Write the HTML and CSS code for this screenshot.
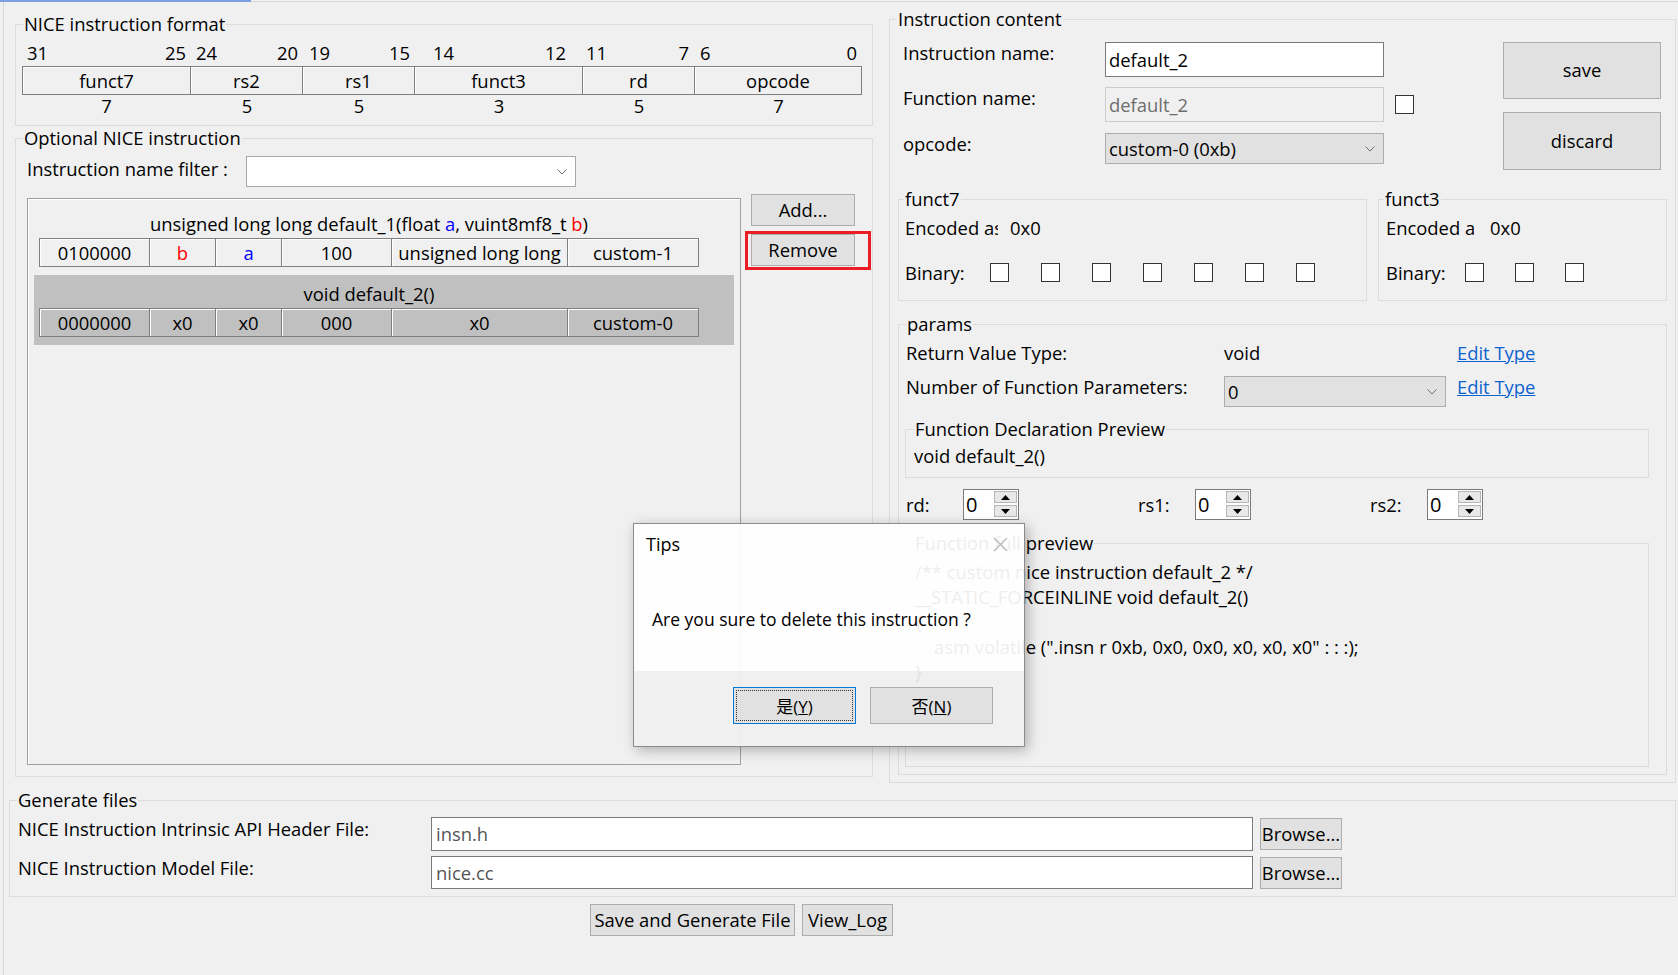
FILE: index.html
```html
<!DOCTYPE html>
<html>
<head>
<meta charset="utf-8">
<title>NICE instruction</title>
<link rel="stylesheet" href="styles.css">
</head>
<body>
<div class="app">
  <div class="tabbar"><div class="tab-sel"></div><div class="tab-rest"></div></div>
  <div class="pane">
    <div class="top">
      <div class="leftcol">
        <fieldset class="grp fmt">
          <legend>NICE instruction format</legend>
          <div class="bits">
            <div class="bitcell"><span>31</span><span>25</span></div>
            <div class="bitcell"><span>24</span><span>20</span></div>
            <div class="bitcell"><span>19</span><span>15</span></div>
            <div class="bitcell"><span>14</span><span>12</span></div>
            <div class="bitcell"><span>11</span><span>7</span></div>
            <div class="bitcell"><span>6</span><span>0</span></div>
          </div>
          <div class="fmt-table">
            <div class="fcell">funct7</div>
            <div class="fcell">rs2</div>
            <div class="fcell">rs1</div>
            <div class="fcell">funct3</div>
            <div class="fcell">rd</div>
            <div class="fcell">opcode</div>
          </div>
          <div class="wrow">
            <div>7</div><div>5</div><div>5</div><div>3</div><div>5</div><div>7</div>
          </div>
        </fieldset>

        <fieldset class="grp opt">
          <legend>Optional NICE instruction</legend>
          <div class="filter-row">
            <div class="filter-label">Instruction name filter :</div>
            <div class="combo white filter-combo">
              <span class="combo-text"></span>
              <svg class="chev" width="10" height="6" viewBox="0 0 10 6"><polyline points="0.5,0.5 5,5 9.5,0.5" fill="none" stroke="#707070" stroke-width="1"/></svg>
            </div>
          </div>
          <div class="list-row">
            <div class="list">
              <div class="item">
                <div class="item-head">unsigned long long default_1(float <span class="blue">a</span>, vuint8mf8_t <span class="red">b</span>)</div>
                <div class="item-table">
                  <div class="icell">0100000</div>
                  <div class="icell red">b</div>
                  <div class="icell blue">a</div>
                  <div class="icell">100</div>
                  <div class="icell">unsigned long long</div>
                  <div class="icell">custom-1</div>
                </div>
              </div>
              <div class="item sel">
                <div class="item-head">void default_2()</div>
                <div class="item-table">
                  <div class="icell">0000000</div>
                  <div class="icell">x0</div>
                  <div class="icell">x0</div>
                  <div class="icell">000</div>
                  <div class="icell">x0</div>
                  <div class="icell">custom-0</div>
                </div>
              </div>
            </div>
            <div class="side-btns">
              <button class="btn add">Add...</button>
              <div class="hl-wrap">
                <button class="btn remove">Remove</button>
                <div class="hl"></div>
              </div>
            </div>
          </div>
        </fieldset>
      </div>

      <fieldset class="grp content">
        <legend>Instruction content</legend>
        <div class="ic-top">
          <div class="form">
            <div class="frow">
              <div class="flabel">Instruction name:</div>
              <div class="tinput">default_2</div>
            </div>
            <div class="frow">
              <div class="flabel">Function name:</div>
              <div class="tinput dis">default_2</div>
              <span class="chk fchk"></span>
            </div>
            <div class="frow r3">
              <div class="flabel">opcode:</div>
              <div class="combo ocombo">
                <span class="combo-text">custom-0 (0xb)</span>
                <svg class="chev" width="10" height="6" viewBox="0 0 10 6"><polyline points="0.5,0.5 5,5 9.5,0.5" fill="none" stroke="#707070" stroke-width="1"/></svg>
              </div>
            </div>
          </div>
          <div class="ic-btns">
            <button class="btn save">save</button>
            <button class="btn discard">discard</button>
          </div>
        </div>

        <div class="funct-row">
          <fieldset class="grp f7">
            <legend>funct7</legend>
            <div class="enc-row"><span class="enc-label">Encoded as:</span><span class="enc-val">0x0</span></div>
            <div class="bin-row">
              <span class="bin-label">Binary:</span>
              <span class="chk"></span><span class="chk"></span><span class="chk"></span><span class="chk"></span><span class="chk"></span><span class="chk"></span><span class="chk"></span>
            </div>
          </fieldset>
          <fieldset class="grp f3">
            <legend>funct3</legend>
            <div class="enc-row"><span class="enc-label">Encoded as:</span><span class="enc-val">0x0</span></div>
            <div class="bin-row">
              <span class="bin-label">Binary:</span>
              <span class="chk"></span><span class="chk"></span><span class="chk"></span>
            </div>
          </fieldset>
        </div>

        <fieldset class="grp params">
          <legend>params</legend>
          <div class="prow1">
            <span class="plabel">Return Value Type:</span>
            <span class="pval">void</span>
            <span class="link">Edit Type</span>
          </div>
          <div class="prow2">
            <span class="plabel">Number of Function Parameters:</span>
            <div class="combo pcombo">
              <span class="combo-text">0</span>
              <svg class="chev" width="10" height="6" viewBox="0 0 10 6"><polyline points="0.5,0.5 5,5 9.5,0.5" fill="none" stroke="#707070" stroke-width="1"/></svg>
            </div>
            <span class="link">Edit Type</span>
          </div>
          <fieldset class="grp decl">
            <legend>Function Declaration Preview</legend>
            <div class="decl-text">void default_2()</div>
          </fieldset>
          <div class="spin-row">
            <div class="sgroup">
              <span class="slabel">rd:</span>
              <div class="spin"><span class="spin-val">0</span><div class="spin-btns"><span class="sbtn"><svg width="9" height="5" viewBox="0 0 9 5"><polygon points="0,5 4.5,0 9,5" fill="#000"/></svg></span><span class="sbtn"><svg width="9" height="5" viewBox="0 0 9 5"><polygon points="0,0 4.5,5 9,0" fill="#000"/></svg></span></div></div>
            </div>
            <div class="sgroup">
              <span class="slabel">rs1:</span>
              <div class="spin"><span class="spin-val">0</span><div class="spin-btns"><span class="sbtn"><svg width="9" height="5" viewBox="0 0 9 5"><polygon points="0,5 4.5,0 9,5" fill="#000"/></svg></span><span class="sbtn"><svg width="9" height="5" viewBox="0 0 9 5"><polygon points="0,0 4.5,5 9,0" fill="#000"/></svg></span></div></div>
            </div>
            <div class="sgroup">
              <span class="slabel">rs2:</span>
              <div class="spin"><span class="spin-val">0</span><div class="spin-btns"><span class="sbtn"><svg width="9" height="5" viewBox="0 0 9 5"><polygon points="0,5 4.5,0 9,5" fill="#000"/></svg></span><span class="sbtn"><svg width="9" height="5" viewBox="0 0 9 5"><polygon points="0,0 4.5,5 9,0" fill="#000"/></svg></span></div></div>
            </div>
          </div>
          <fieldset class="grp full">
            <legend>Function full preview</legend>
            <div class="code">
              <div class="cl">/** custom nice instruction default_2 */</div>
              <div class="cl">__STATIC_FORCEINLINE void default_2()</div>
              <div class="cl">{</div>
              <div class="cl ind">asm volatile (".insn r 0xb, 0x0, 0x0, x0, x0, x0" : : :);</div>
              <div class="cl">}</div>
            </div>
          </fieldset>
        </fieldset>
      </fieldset>
    </div>

    <fieldset class="grp gen">
      <legend>Generate files</legend>
      <div class="grow g1">
        <span class="glabel">NICE Instruction Intrinsic API Header File:</span>
        <div class="ginput">insn.h</div>
        <button class="btn browse">Browse...</button>
      </div>
      <div class="grow g2">
        <span class="glabel">NICE Instruction Model File:</span>
        <div class="ginput">nice.cc</div>
        <button class="btn browse">Browse...</button>
      </div>
    </fieldset>

    <div class="bottom-btns">
      <button class="btn bb1">Save and Generate File</button>
      <button class="btn bb2">View_Log</button>
    </div>
  </div>

  <div class="dialog">
    <div class="dlg-body">
      <div class="dlg-title">
        <span>Tips</span>
        <svg class="dlg-close" width="15" height="15" viewBox="0 0 15 15"><path d="M1 1L14 14M14 1L1 14" stroke="#b8b8b8" stroke-width="1.3" fill="none"/></svg>
      </div>
      <div class="dlg-msg">Are you sure to delete this instruction ?</div>
    </div>
    <div class="dlg-foot">
      <button class="dbtn yes">是(<u>Y</u>)</button>
      <button class="dbtn">否(<u>N</u>)</button>
    </div>
  </div>
</div>
</body>
</html>
```

FILE: styles.css
```css
* { box-sizing: border-box; }
html, body { margin: 0; padding: 0; }
body {
  background: #f0f0f0;
  font-family: "Open Sans", "Noto Sans CJK SC", sans-serif;
  font-size: 18.4px;
  color: #000;
}
.app { position: relative; width: 1678px; height: 975px; overflow: hidden; }

.tabbar { display: flex; height: 2px; }
.tab-sel { width: 251px; background: #7ba0e4; }
.tab-rest { flex: 1; margin-top: 1px; height: 1px; background: #d9d9d9; }

.pane { margin-left: 3px; border-left: 1px solid #d9d9d9; height: 973px; }
.top { display: flex; align-items: flex-start; padding-top: 6px; }

.grp { margin: 0; padding: 0; border: 1px solid #dcdcdc; min-width: 0; flex: none; }
.grp > legend { padding: 0 1px; margin-left: 7px; line-height: 22px; }

.btn {
  font: inherit;
  color: #000;
  background: #e1e1e1;
  border: 1px solid #adadad;
  padding: 0;
  line-height: 1;
}

/* left column */
.leftcol { margin-left: 11px; margin-top: 5px; width: 858px; flex: none; }
.fmt { height: 113px; }
.bits, .wrow {
  display: grid;
  grid-template-columns: 169px 112px 112px 168px 112px 167px;
  margin-left: 6px;
  line-height: 20px;
  height: 20px;
}
.bits { margin-top: 8px; }
.bitcell { display: flex; justify-content: space-between; padding: 0 5px; }
.bitcell:nth-child(1) { padding: 0 5px 0 5px; }
.bitcell:nth-child(3) { padding: 0 5px 0 6px; }
.bitcell:nth-child(4) { padding: 0 17px 0 18px; }
.bitcell:nth-child(5) { padding: 0 6px 0 3px; }
.fmt-table {
  display: grid;
  grid-template-columns: 168px 112px 112px 168px 112px 166px;
  width: 840px;
  height: 29px;
  margin: 3px 0 0 6px;
  border: 1px solid #7f7f7f;
}
.fcell, .icell {
  border-right: 1px solid #7f7f7f;
  box-shadow: inset 1px 1px 0 #fff;
  text-align: center;
  line-height: 27px;
  white-space: nowrap;
  overflow: hidden;
}
.fcell:last-child, .icell:last-child { border-right: 0; }
.wrow { margin-top: 1px; text-align: center; }

.opt { margin-top: 1px; height: 650px; }
.filter-row { display: flex; margin-top: 7px; padding-left: 11px; height: 31px; }
.filter-label { width: 219px; padding-top: 3px; line-height: 20px; }
.combo {
  display: flex;
  align-items: center;
  border: 1px solid #adadad;
  background: #e1e1e1;
  padding-left: 3px;
}
.combo.white { background: #fff; border-color: #a8a8a8; }
.combo-text { flex: 1; white-space: nowrap; }
.chev { margin-right: 8px; flex: none; }
.filter-combo { width: 330px; height: 31px; }

.list-row { display: flex; align-items: flex-start; margin-top: 7px; padding-left: 11px; }
.list {
  margin-top: 4px;
  width: 714px;
  height: 567px;
  border: 1px solid #a0a0a0;
  box-shadow: inset 1px 1px 0 #fff;
  padding: 6px;
  flex: none;
}
.item { height: 70px; }
.item.sel { background: #c0c0c0; }
.item-head {
  width: 660px;
  margin-left: 5px;
  padding-top: 7px;
  line-height: 24px;
  text-align: center;
  white-space: nowrap;
}
.item-table {
  display: grid;
  grid-template-columns: 110px 66px 66px 110px 176px 130px;
  width: 660px;
  height: 29px;
  margin: 2px 0 0 5px;
  border: 1px solid #7f7f7f;
}
.red { color: #ff0000; }
.blue { color: #0000ff; }

.side-btns { margin-left: 10px; width: 104px; display: flex; flex-direction: column; }
.add { height: 32px; }
.hl-wrap { position: relative; margin-top: 8px; }
.remove { display: block; width: 104px; height: 32px; }
.hl {
  position: absolute;
  left: -6px;
  top: -3px;
  width: 126px;
  height: 39px;
  border: 3px solid #ec1c24;
}

/* right column */
.content { margin-left: 16px; width: 787px; height: 775px; }
.ic-top { display: flex; margin-top: 12px; padding-left: 13px; }
.form { width: 511px; flex: none; }
.frow { display: flex; align-items: flex-start; }
.frow + .frow { margin-top: 10px; }
.frow.r3 { margin-top: 11px; }
.flabel { width: 202px; line-height: 20px; padding-top: 1px; flex: none; }
.tinput {
  width: 279px;
  height: 35px;
  border: 1px solid #7a7a7a;
  background: #fff;
  padding-left: 3px;
  line-height: 33px;
  white-space: nowrap;
  flex: none;
}
.tinput.dis { background: #f0f0f0; border-color: #cccccc; color: #6d6d6d; }
.chk { display: inline-block; width: 19px; height: 19px; border: 1px solid #333; background: #fff; flex: none; }
.fchk { margin: 8px 0 0 11px; }
.ocombo { width: 279px; height: 31px; }
.ic-btns { margin-left: 89px; width: 158px; display: flex; flex-direction: column; }
.save { height: 57px; }
.discard { height: 58px; margin-top: 13px; }

.funct-row { display: flex; margin: 18px 0 0 8px; }
.f7 { width: 469px; height: 113px; }
.f3 { width: 289px; height: 113px; margin-left: 11px; }
.f7 > legend, .f3 > legend { margin-left: 5px; }
.enc-row { display: flex; margin-top: 8px; line-height: 20px; }
.f7 .enc-row, .f7 .bin-row { padding-left: 6px; }
.f3 .enc-row, .f3 .bin-row { padding-left: 7px; }
.enc-label { overflow: hidden; white-space: nowrap; flex: none; }
.f7 .enc-label { width: 93px; }
.f7 .enc-val { margin-left: 12px; }
.f3 .enc-label { width: 88px; }
.f3 .enc-val { margin-left: 16px; }
.bin-row { display: flex; align-items: center; height: 20px; margin-top: 24px; }
.f7 .bin-label { width: 85px; flex: none; }
.f3 .bin-label { width: 79px; flex: none; }
.f7 .bin-row .chk + .chk { margin-left: 32px; }
.f3 .bin-row .chk + .chk { margin-left: 31px; }

.params { margin: 12px 0 0 8px; width: 769px; height: 462px; }
.prow1 { display: flex; margin-top: 8px; padding-left: 7px; line-height: 20px; }
.plabel { width: 318px; flex: none; }
.pval { width: 233px; flex: none; }
.link { color: #0b63ce; text-decoration: underline; }
.prow2 { display: flex; align-items: flex-start; margin-top: 13px; padding-left: 7px; height: 31px; }
.prow2 .plabel { padding-top: 1px; line-height: 20px; }
.pcombo { width: 222px; height: 31px; flex: none; }
.prow2 .link { margin-left: 11px; padding-top: 1px; line-height: 20px; }

.decl { margin: 11px 0 0 6px; width: 744px; height: 60px; }
.decl > legend, .full > legend { margin-left: 8px; }
.decl-text { padding: 6px 0 0 8px; line-height: 20px; }

.spin-row { display: flex; margin-top: 11px; padding-left: 7px; height: 31px; }
.sgroup { display: flex; align-items: center; width: 232px; flex: none; }
.slabel { width: 57px; flex: none; }
.spin { display: flex; width: 56px; height: 31px; border: 1px solid #7a7a7a; background: #fff; flex: none; }
.spin-val { flex: 1; padding-left: 2px; line-height: 29px; font-size: 20px; }
.spin-btns { display: flex; flex-direction: column; gap: 2px; padding: 1px 1px 0 0; }
.sbtn {
  display: flex;
  align-items: center;
  justify-content: center;
  width: 23px;
  height: 12px;
  border: 1px solid #b5b5b5;
  background: #e8e8e8;
}

.full { margin: 12px 0 0 6px; width: 744px; height: 235px; }
.code { padding: 5px 0 0 9px; }
.cl { line-height: 25px; white-space: pre; }
.cl.ind { padding-left: 19px; }

/* generate */
.gen { margin: 6px 0 0 5px; width: 1667px; height: 108px; }
.grow { display: flex; align-items: flex-start; padding-left: 8px; }
.g1 { margin-top: 6px; }
.g2 { margin-top: 5px; }
.glabel { width: 413px; padding-top: 2px; line-height: 20px; flex: none; }
.ginput {
  width: 822px;
  height: 34px;
  border: 1px solid #7a7a7a;
  background: #fff;
  color: #555;
  padding-left: 4px;
  line-height: 32px;
  flex: none;
}
.g2 .ginput { height: 33px; line-height: 31px; }
.browse { width: 82px; height: 32px; margin: 1px 0 0 7px; flex: none; }

.bottom-btns { display: flex; gap: 7px; margin-top: 7px; padding-left: 586px; }
.bb1 { width: 205px; height: 32px; }
.bb2 { width: 91px; height: 32px; }

/* dialog */
.dialog {
  position: absolute;
  left: 633px;
  top: 523px;
  width: 392px;
  height: 224px;
  border: 1px solid #8c8c8c;
  box-shadow: 3px 3px 12px rgba(0, 0, 0, 0.28);
  display: flex;
  flex-direction: column;
}
.dlg-body { background: rgba(255, 255, 255, 0.93); height: 147px; }
.dlg-title { display: flex; align-items: center; height: 24px; margin-top: 8px; padding-left: 12px; font-size: 18px; }
.dlg-close { margin-left: auto; margin-right: 16px; }
.dlg-msg { margin-top: 51px; padding-left: 18px; font-size: 17.5px; line-height: 24px; white-space: nowrap; }
.dlg-foot {
  flex: 1;
  background: rgba(240, 240, 240, 0.93);
  display: flex;
  justify-content: flex-end;
  gap: 14px;
  padding: 16px 31px 0 0;
}
.dbtn {
  font: inherit;
  font-size: 17px;
  width: 123px;
  height: 37px;
  padding: 0;
  color: #000;
  background: #e1e1e1;
  border: 1px solid #adadad;
}
.dbtn.yes { border-color: #0078d7; outline: 1px dotted #333; outline-offset: -4px; }
```
